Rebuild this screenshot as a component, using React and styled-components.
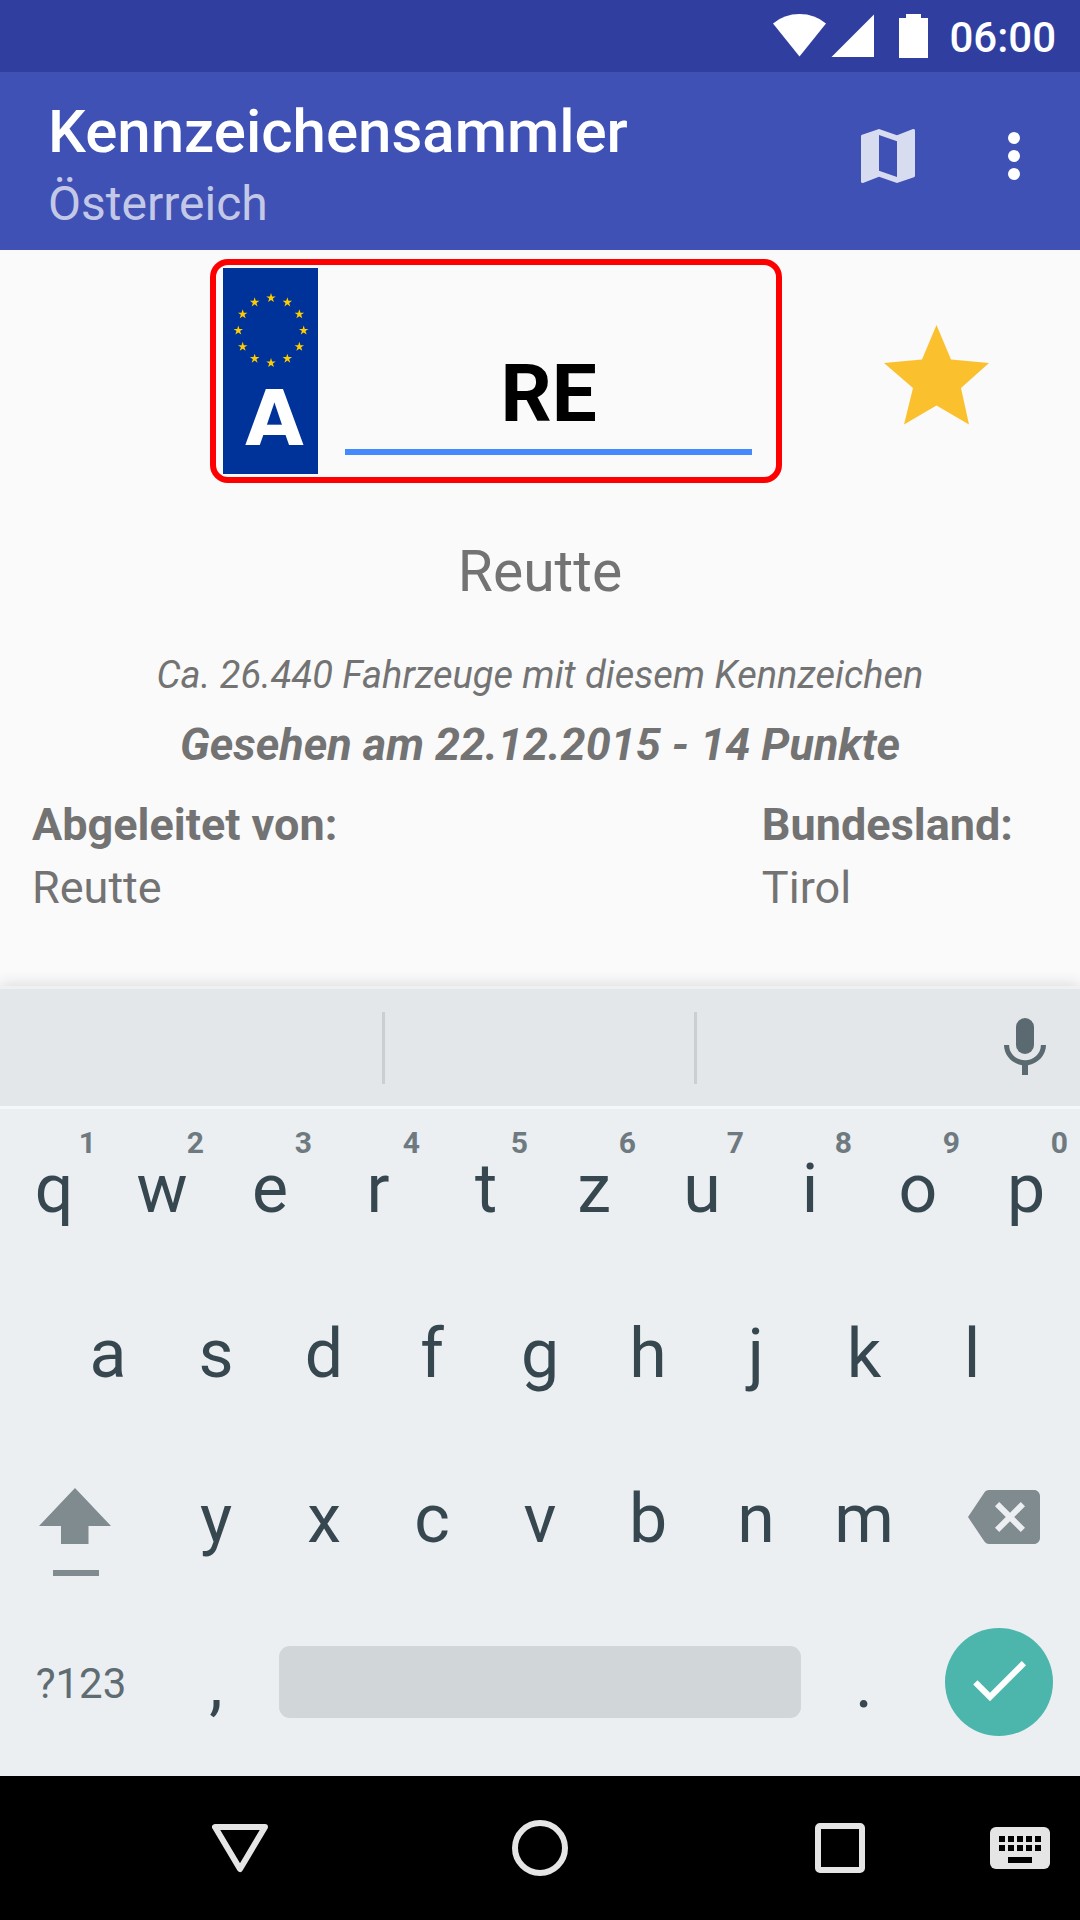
import React, { useState } from "react";
import styled, { createGlobalStyle } from "styled-components";

const GlobalStyle = createGlobalStyle`
  *, *::before, *::after { box-sizing: border-box; }
  body {
    margin: 0;
    background: #fafafa;
    font-family: Roboto, "Liberation Sans", sans-serif;
  }
  button, input { font-family: inherit; }
`;

const Screen = styled.div`
  display: flex;
  flex-direction: column;
  min-height: 100vh;
`;

const Icon = styled.svg`
  display: block;
  flex: none;
  fill: currentColor;
`;

const PlainButton = styled.button`
  display: flex;
  align-items: center;
  justify-content: center;
  margin: 0;
  padding: 0;
  border: 0;
  background: none;
  color: inherit;
`;

/* Status bar */

const StatusBar = styled.header`
  display: flex;
  align-items: center;
  justify-content: flex-end;
  height: 72px;
  padding-right: 24px;
  background: #303f9f;
  color: #fff;
`;

const Clock = styled.time`
  margin-left: 20px;
  padding-top: 3px;
  font-size: 42px;
  font-weight: 500;
  line-height: 50px;
`;

/* App bar */

const AppBar = styled.header`
  display: flex;
  justify-content: space-between;
  padding: 24px 30px 18px 48px;
  background: #3f51b5;
  color: #fff;
`;

const Titles = styled.div`
  display: flex;
  flex-direction: column;
  gap: 8px;
`;

const Title = styled.h1`
  margin: 0;
  font-size: 60px;
  font-weight: 500;
  line-height: 72px;
`;

const Subtitle = styled.p`
  margin: 0;
  font-size: 48px;
  line-height: 56px;
  color: rgba(255, 255, 255, 0.7);
`;

const Actions = styled.div`
  display: flex;
  align-items: flex-start;
  gap: 54px;
  padding-top: 24px;
`;

const ActionButton = styled(PlainButton)`
  opacity: ${(p) => (p.$soft ? 0.8 : 1)};
`;

/* Content */

const Content = styled.main`
  flex: 1;
  padding-top: 9px;
  color: #737373;
`;

const PlateRow = styled.div`
  display: grid;
  grid-template-columns: minmax(0, 210fr) minmax(0, 572fr) minmax(0, 298fr);
  align-items: center;
`;

const Plate = styled.div`
  grid-column: 2;
  display: flex;
  align-items: flex-end;
  padding: 3px 24px 3px 7px;
  border: 6px solid #f00;
  border-radius: 18px;
`;

const EuroBand = styled.div`
  display: flex;
  flex-direction: column;
  align-items: center;
  flex: none;
  width: 95px;
  height: 206px;
  padding-top: 22px;
  background: #039;
  color: #fc0;
`;

const Country = styled.span`
  padding-left: 8px;
  font-family: "DejaVu Sans", sans-serif;
  font-size: 76px;
  font-weight: 700;
  line-height: 98px;
  color: #fff;
`;

const CodeInput = styled.input`
  flex: 1;
  width: 0;
  min-width: 0;
  margin: 0 0 19px 27px;
  padding: 0 0 8px;
  border: 0;
  border-bottom: 6px solid #448aff;
  border-radius: 0;
  outline: 0;
  background: none;
  color: #000;
  font-size: 80px;
  font-weight: 700;
  text-align: center;
`;

const StarButton = styled(PlainButton)`
  justify-self: end;
  margin-right: 89px;
  color: #fbc02d;
`;

const District = styled.h2`
  margin: 55px 0 46px;
  font-size: 57px;
  font-weight: 400;
  line-height: 68px;
  text-align: center;
`;

const Vehicles = styled.p`
  margin: 0 0 20px;
  font-size: 38px;
  font-style: italic;
  line-height: 46px;
  text-align: center;
`;

const Seen = styled.p`
  margin: 0 0 26px;
  font-size: 45px;
  font-style: italic;
  font-weight: 700;
  line-height: 54px;
  text-align: center;
`;

const Facts = styled.dl`
  display: flex;
  justify-content: space-between;
  margin: 0;
  padding: 0 67px 0 32px;
  font-size: 45px;
  line-height: 54px;
`;

const Fact = styled.div`
  display: flex;
  flex-direction: column;
  gap: 9px;
`;

const FactName = styled.dt`
  font-weight: 700;
`;

const FactValue = styled.dd`
  margin: 0;
`;

/* Keyboard */

const Keyboard = styled.section`
  padding-bottom: 7px;
  background: #ebeff2;
  color: #37474f;
  box-shadow: 0 -2px 14px rgba(0, 0, 0, 0.12);
`;

const SuggestionStrip = styled.div`
  display: flex;
  align-items: center;
  height: 123px;
  border-top: 3px solid #eef0f1;
  border-bottom: 3px solid #f5f7f9;
  background: #e3e7e9;
`;

const Suggestion = styled(PlainButton)`
  flex: ${(p) => p.$weight} 1 0;
  height: 72px;
  border-right: ${(p) => (p.$last ? "0" : "3px solid #cbcfd1")};
`;

const MicButton = styled(PlainButton)`
  width: 110px;
  color: #5b6a71;
`;

/* Each key spans two columns, so wide keys can take one and a half widths. */
const KeyRow = styled.div`
  display: grid;
  grid-template-columns: repeat(${(p) => (p.$inset ? 18 : 20)}, minmax(0, 1fr));
  height: 165px;
  padding: 0 ${(p) => (p.$inset ? "5%" : "0")};
`;

const Key = styled(PlainButton)`
  position: relative;
  grid-column: span ${(p) => p.$span || 2};
  padding-bottom: ${(p) => (p.$drawn ? "10px" : "6px")};
  font-size: 68px;
`;

const KeyHint = styled.span`
  position: absolute;
  top: 16px;
  right: 12px;
  font-size: 30px;
  font-weight: 700;
  line-height: 36px;
  color: #6e7a80;
`;

const SymbolsKey = styled(Key)`
  font-size: 42px;
  color: #5f6c72;
`;

const ShiftKey = styled(Key)`
  justify-content: flex-start;
  padding-left: 39px;
  color: #808b8f;
`;

const DeleteKey = styled(Key)`
  justify-content: flex-end;
  padding-right: 40px;
  color: #808b8f;
`;

const SpaceBar = styled.span`
  width: 100%;
  height: 72px;
  margin: 0 9px;
  border-radius: 11px;
  background: #d1d6d9;
`;

const EnterDisc = styled.span`
  display: flex;
  align-items: center;
  justify-content: center;
  width: 108px;
  height: 108px;
  border-radius: 50%;
  background: #4db6ac;
  color: #fff;
`;

/* Navigation bar */

const NavBar = styled.nav`
  display: grid;
  grid-template-columns: 90fr 300fr 300fr 300fr 90fr;
  height: 144px;
  background: #000;
  color: #e5e5e5;
`;

const NavButton = styled(PlainButton)`
  grid-column: ${(p) => p.$column};
  justify-content: ${(p) => (p.$start ? "flex-start" : "center")};
`;

const starPoints = (cx, cy, r) =>
  Array.from({ length: 10 }, (_, i) => {
    const radius = i % 2 ? r * 0.382 : r;
    const angle = (i * Math.PI) / 5;
    return `${cx + radius * Math.sin(angle)},${cy - radius * Math.cos(angle)}`;
  }).join(" ");

const EuroStars = () => (
  <Icon width="80" height="80" viewBox="0 0 80 80">
    {Array.from({ length: 12 }, (_, i) => {
      const angle = (i * Math.PI) / 6;
      return (
        <polygon
          key={i}
          points={starPoints(40 + 32.7 * Math.sin(angle), 40.5 - 32.5 * Math.cos(angle), 5)}
        />
      );
    })}
  </Icon>
);

const topRow = [
  ["q", 1], ["w", 2], ["e", 3], ["r", 4], ["t", 5],
  ["z", 6], ["u", 7], ["i", 8], ["o", 9], ["p", 0],
];
const homeRow = [..."asdfghjkl"];
const bottomRow = [..."yxcvbnm"];

export default function App() {
  const [code, setCode] = useState("RE");

  return (
    <Screen>
      <GlobalStyle />
      <StatusBar>
        <Icon width="156" height="44" viewBox="0 0 156 44">
          <path d="M0 9.5Q11 0 26.500 0T53 9.500L26.500 42.500Z" />
          <path d="M101 .5V43H58.500Z" />
          <path d="M126 4h7V0h15v4h7v40h-29Z" />
        </Icon>
        <Clock>06:00</Clock>
      </StatusBar>

      <AppBar>
        <Titles>
          <Title>Kennzeichensammler</Title>
          <Subtitle>Österreich</Subtitle>
        </Titles>
        <Actions>
          <ActionButton $soft aria-label="Karte">
            <Icon width="72" height="72" viewBox="0 0 24 24">
              <path d="M20.500 3l-.16.030L15 5.100 9 3 3.360 4.900c-.21.070-.36.250-.36.480V20.500c0 .28.220.5.500.5l.16-.030L9 18.900l6 2.100 5.640-1.900c.21-.070.360-.250.360-.480V3.500c0-.28-.220-.5-.5-.5zM15 19l-6-2.110V5l6 2.110V19z" />
            </Icon>
          </ActionButton>
          <ActionButton aria-label="Weitere Optionen">
            <Icon width="72" height="72" viewBox="0 0 24 24">
              <circle cx="12" cy="6" r="2" />
              <circle cx="12" cy="12" r="2" />
              <circle cx="12" cy="18" r="2" />
            </Icon>
          </ActionButton>
        </Actions>
      </AppBar>

      <Content>
        <PlateRow>
          <Plate>
            <EuroBand>
              <EuroStars />
              <Country>A</Country>
            </EuroBand>
            <CodeInput
              aria-label="Kennzeichen"
              value={code}
              onChange={(e) => setCode(e.target.value)}
            />
          </Plate>
          <StarButton aria-label="Gesehen">
            <Icon width="108" height="108" viewBox="0 0 108 108">
              <polygon points="53.5,8 68,42.5 106,46 78,71 86,107.500 53.5,88.500 21,107.500 30,71 1,46 39,42.5" />
            </Icon>
          </StarButton>
        </PlateRow>

        <District>Reutte</District>
        <Vehicles>Ca. 26.440 Fahrzeuge mit diesem Kennzeichen</Vehicles>
        <Seen>Gesehen am 22.12.2015 - 14 Punkte</Seen>
        <Facts>
          <Fact>
            <FactName>Abgeleitet von:</FactName>
            <FactValue>Reutte</FactValue>
          </Fact>
          <Fact>
            <FactName>Bundesland:</FactName>
            <FactValue>Tirol</FactValue>
          </Fact>
        </Facts>
      </Content>

      <Keyboard>
        <SuggestionStrip>
          <Suggestion $weight={382} aria-label="Vorschlag 1" />
          <Suggestion $weight={309} aria-label="Vorschlag 2" />
          <Suggestion $weight={273} $last aria-label="Vorschlag 3" />
          <MicButton aria-label="Spracheingabe">
            <Icon width="72" height="72" viewBox="0 0 24 24">
              <rect x="9" y="2" width="6" height="12" rx="3" />
              <path d="M17.300 11c0 3-2.540 5.100-5.300 5.100S6.700 14 6.700 11H5c0 3.410 2.720 6.230 6 6.720V21h2v-3.280c3.280-.48 6-3.300 6-6.720h-1.700z" />
            </Icon>
          </MicButton>
        </SuggestionStrip>
        <KeyRow>
          {topRow.map(([letter, digit]) => (
            <Key key={letter}>
              {letter}
              <KeyHint>{digit}</KeyHint>
            </Key>
          ))}
        </KeyRow>
        <KeyRow $inset>
          {homeRow.map((letter) => (
            <Key key={letter}>{letter}</Key>
          ))}
        </KeyRow>
        <KeyRow>
          <ShiftKey $span={3} $drawn aria-label="Umschalten">
            <Icon width="72" height="118" viewBox="0 0 72 118">
              <path d="M36 30 72 68H49.500V86H22V68H0Z" />
              <path d="M14 112h46v6H14Z" />
            </Icon>
          </ShiftKey>
          {bottomRow.map((letter) => (
            <Key key={letter}>{letter}</Key>
          ))}
          <DeleteKey $span={3} $drawn aria-label="Löschen">
            <Icon width="72" height="72" viewBox="0 0 24 24">
              <path d="M22 3H7c-.69 0-1.230.350-1.590.880L0 12l5.410 8.110c.36.530.9.890 1.590.890h15c1.100 0 2-.9 2-2V5c0-1.100-.9-2-2-2zm-3 12.590L17.590 17 14 13.410 10.410 17 9 15.590 12.590 12 9 8.410 10.410 7 14 10.590 17.590 7 19 8.410 15.410 12 19 15.590z" />
            </Icon>
          </DeleteKey>
        </KeyRow>
        <KeyRow>
          <SymbolsKey $span={3}>?123</SymbolsKey>
          <Key>,</Key>
          <Key $span={10} $drawn aria-label="Leerzeichen">
            <SpaceBar />
          </Key>
          <Key>.</Key>
          <Key $span={3} $drawn aria-label="Fertig">
            <EnterDisc>
              <Icon width="72" height="72" viewBox="0 0.6 24 24">
                <path d="M9 16.170L4.830 12l-1.420 1.410L9 19 21 7l-1.410-1.410z" />
              </Icon>
            </EnterDisc>
          </Key>
        </KeyRow>
      </Keyboard>

      <NavBar>
        <NavButton $column={2} aria-label="Zurück">
          <Icon width="56" height="56" viewBox="0 0 56 56">
            <path
              d="M3 7H53L28 49Z"
              fill="none"
              stroke="currentColor"
              strokeWidth="6"
              strokeLinejoin="round"
            />
          </Icon>
        </NavButton>
        <NavButton $column={3} aria-label="Startseite">
          <Icon width="56" height="56" viewBox="0 0 56 56">
            <circle cx="28" cy="28" r="25" fill="none" stroke="currentColor" strokeWidth="6" />
          </Icon>
        </NavButton>
        <NavButton $column={4} aria-label="Übersicht">
          <Icon width="50" height="50" viewBox="0 0 50 50">
            <path d="M5 0H45a5 5 0 0 1 5 5V45a5 5 0 0 1-5 5H5a5 5 0 0 1-5-5V5a5 5 0 0 1 5-5ZM6 6V44H44V6Z" fillRule="evenodd" />
          </Icon>
        </NavButton>
        <NavButton $column={5} $start aria-label="Tastatur wählen">
          <Icon width="60" height="42" viewBox="0 0 60 42">
            <rect width="60" height="42" rx="6" />
            {[9, 18].map((y) =>
              [9, 18, 27, 36, 45].map((x) => (
                <rect key={`${x}-${y}`} x={x} y={y} width="6" height="6" fill="#000" />
              ))
            )}
            <rect x="18" y="30" width="24" height="6" fill="#000" />
          </Icon>
        </NavButton>
      </NavBar>
    </Screen>
  );
}
